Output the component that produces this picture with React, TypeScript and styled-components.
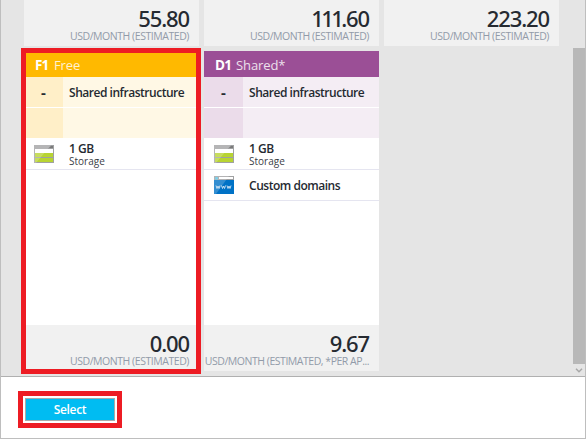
import React from "react";
import styled, { createGlobalStyle } from "styled-components";

const GlobalStyle = createGlobalStyle`
  *, *::before, *::after { box-sizing: border-box; }
  body { margin: 0; font-family: "Open Sans", "Noto Sans", sans-serif; color: #252a31; }
`;

const Blade = styled.main`
  position: relative;
  width: 586px;
  height: 439px;
  display: flex;
  flex-direction: column;
  overflow: hidden;
  background: #fff;
  border: solid #bebebe;
  border-width: 0 1px 1px;
`;

const Pane = styled.section`
  flex: none;
  height: 377px;
  display: flex;
  justify-content: space-between;
  background: #e5e5e5;
  border-bottom: 1px solid #b0b0b0;
`;

const Tiers = styled.div`
  display: grid;
  grid-template-columns: repeat(3, 175px);
  grid-template-rows: 46px 320px;
  gap: 5px;
  padding-left: 23px;
`;

const Card = styled.article`
  display: flex;
  flex-direction: column;
  background: #fff;
  min-width: 0;
`;

const Header = styled.header<{ $color: string }>`
  height: 26px;
  flex: none;
  display: flex;
  align-items: center;
  padding: 2px 0 0 11px;
  background: ${(p) => p.$color};
  color: #fff;
  font-size: 13px;
  line-height: 24px;
`;

const Code = styled.b<{ $width: number }>`
  width: ${(p) => p.$width}px;
  font-size: 13.5px;
  font-weight: 700;
  letter-spacing: -0.8px;
`;

const TierName = styled.span`
  opacity: 0.82;
  letter-spacing: -0.1px;
`;

const Resource = styled.div<{ $side: string; $body: string }>`
  height: 30px;
  flex: none;
  display: grid;
  grid-template-columns: 39px 1fr;
  background: linear-gradient(to right, ${(p) => p.$side} 39px, ${(p) => p.$body} 39px);
  & + & { margin-top: 1px; }
`;

const Dash = styled.span`
  font-size: 15px;
  font-weight: 700;
  line-height: 31px;
  padding-left: 17px;
`;

const Label = styled.span`
  font-size: 12px;
  font-weight: 600;
  line-height: 32px;
  padding-left: 6px;
  letter-spacing: -0.47px;
  white-space: nowrap;
`;

const Feature = styled.div<{ $height: number }>`
  height: ${(p) => p.$height}px;
  flex: none;
  display: grid;
  grid-template-columns: 39px 1fr;
  border-bottom: 1px solid #e5e5f0;
  svg { margin: ${(p) => p.$height - 25}px 0 0 10px; display: block; }
`;

const Quantity = styled.div`
  padding: 4px 0 0 6px;
  display: flex;
  flex-direction: column;
`;

const Amount = styled.span`
  font-size: 12px;
  font-weight: 600;
  line-height: 14px;
  letter-spacing: -0.5px;
`;

const Unit = styled.span`
  font-size: 10px;
  line-height: 10px;
  color: #3b4048;
`;

const Cost = styled.footer`
  height: 46px;
  flex: none;
  margin-top: auto;
  padding: 3px 10px 0 0;
  background: #f1f1f1;
  text-align: right;
  overflow: hidden;
`;

const Price = styled.div`
  height: 27px;
  font-family: "Noto Sans", "Open Sans", sans-serif;
  font-size: 22px;
  font-weight: 500;
  line-height: 31px;
  letter-spacing: -1.1px;
`;

const Ones = styled.span`
  letter-spacing: -2.6px;
`;

const Period = styled.div<{ $spacing: number }>`
  font-size: 10.5px;
  line-height: 12px;
  letter-spacing: ${(p) => p.$spacing}px;
  color: #929ba9;
  white-space: nowrap;
`;

const Scrollbar = styled.div`
  width: 12px;
  display: flex;
  flex-direction: column;
  align-items: center;
  padding-top: 48px;
`;

const Thumb = styled.div`
  width: 12px;
  height: 316px;
  background: #b8b8b8;
  margin-bottom: 4px;
`;

const Actions = styled.section`
  padding: 21px 0 0 24px;
`;

const SelectButton = styled.button`
  display: block;
  width: 90px;
  height: 23px;
  padding: 0;
  border: 1px solid #aaa;
  background: #00bcf2;
  color: #fff;
  font: 600 12px/22px "Open Sans", sans-serif;
  letter-spacing: -0.35px;
`;

const Highlight = styled.div<{ $x: number; $y: number; $w: number; $h: number }>`
  position: absolute;
  left: ${(p) => p.$x}px;
  top: ${(p) => p.$y}px;
  width: ${(p) => p.$w}px;
  height: ${(p) => p.$h}px;
  border: 5px solid #ed1c24;
  pointer-events: none;
`;

const StorageIcon = () => (
  <svg width="20" height="18" viewBox="0 0 20 18">
    <path fill="#a0a1a2" d="M0 0h20v18H0z" />
    <path fill="#fff" d="M1 4h18v4H1z" />
    <path fill="#b8d432" d="M1 8h18v4H1zM1 13h18v4H1z" />
    <path fill="#7a7a7a" d="M17 1h2v2h-4z" />
    <path fill="#fff" opacity=".22" d="M0 0h17L2 18H0z" />
  </svg>
);

const DomainIcon = () => (
  <svg width="20" height="18" viewBox="0 0 20 18">
    <path fill="#0072c6" d="M0 4h20v14H0z" />
    <path fill="#a0a1a2" d="M0 0h20v4H0z" />
    <path fill="#fff" d="M5 1h14v2H5z" />
    <circle cx="2.5" cy="2.2" r="1.5" fill="#59c6e8" />
    <path fill="#fff" opacity=".2" d="M0 0h15L2 18H0z" />
    <path fill="none" stroke="#d5e7f5" strokeWidth=".9" d="M2 9.5l1 3 1-2.5 1 2.5 1-3M7.5 9.5l1 3 1-2.5 1 2.5 1-3M13 9.5l1 3 1-2.5 1 2.5 1-3" />
  </svg>
);

interface CostProps {
  price: React.ReactNode;
  note?: string;
  spacing?: number;
}

const CostBox = ({ price, note = "USD/MONTH (ESTIMATED)", spacing = -0.45 }: CostProps) => (
  <Cost>
    <Price>{price}</Price>
    <Period $spacing={spacing}>{note}</Period>
  </Cost>
);

interface TierProps extends CostProps {
  code: string;
  codeWidth: number;
  name: string;
  colors: [string, string, string];
  domains?: boolean;
}

const Tier = ({ code, codeWidth, name, colors, domains, ...cost }: TierProps) => (
  <Card>
    <Header $color={colors[0]}>
      <Code $width={codeWidth}>{code}</Code>
      <TierName>{name}</TierName>
    </Header>
    <Resource $side={colors[1]} $body={colors[2]}>
      <Dash>-</Dash>
      <Label>Shared infrastructure</Label>
    </Resource>
    <Resource $side={colors[1]} $body={colors[2]} />
    <Feature $height={32}>
      <StorageIcon />
      <Quantity>
        <Amount>1 GB</Amount>
        <Unit>Storage</Unit>
      </Quantity>
    </Feature>
    {domains && (
      <Feature $height={31}>
        <DomainIcon />
        <Label>Custom domains</Label>
      </Feature>
    )}
    <CostBox {...cost} />
  </Card>
);

export default function App() {
  return (
    <>
      <GlobalStyle />
      <Blade>
        <Pane>
          <Tiers>
            <CostBox price="55.80" />
            <CostBox price={<><Ones>111</Ones>.60</>} />
            <CostBox price="223.20" />
            <Tier code="F1" codeWidth={19} name="Free" colors={["#ffb900", "#ffefc8", "#fff8e5"]} price="0.00" />
            <Tier
              code="D1"
              codeWidth={21}
              name="Shared*"
              colors={["#9b4f96", "#ebdcea", "#f4edf4"]}
              price="9.67"
              note="USD/MONTH (ESTIMATED, *PER AP..."
              spacing={-0.47}
              domains
            />
          </Tiers>
          <Scrollbar>
            <Thumb />
            <svg width="8" height="5" viewBox="0 0 8 5">
              <path fill="none" stroke="#a8a8a8" strokeWidth="1.5" d="M1 .8l3 3 3-3" />
            </svg>
          </Scrollbar>
        </Pane>
        <Actions>
          <SelectButton>Select</SelectButton>
        </Actions>
        <Highlight $x={20} $y={48} $w={180} $h={326} />
        <Highlight $x={17} $y={391} $w={104} $h={37} />
      </Blade>
    </>
  );
}
